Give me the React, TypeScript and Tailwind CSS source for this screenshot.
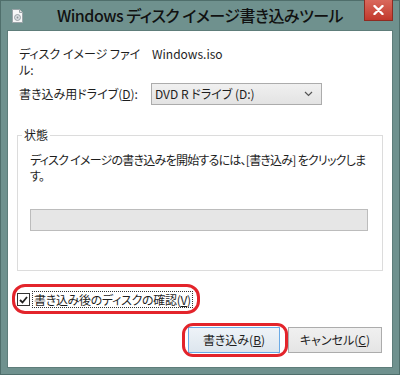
const font = "font-['Noto_Sans_CJK_JP','Noto_Sans',sans-serif] [font-feature-settings:'palt']";

function TitleIcon() {
  return (
    <svg width="11" height="14" viewBox="0 0 11 14" className="block">
      <path d="M0.5 0.5 H7.5 L10.5 3.5 V13.5 H0.5 Z" fill="#f7f7f7" stroke="#9aa4a8" />
      <path d="M7.5 0.5 V3.5 H10.5" fill="#e2e2e2" stroke="#9aa4a8" />
      <circle cx="5.5" cy="8.5" r="3" fill="#d9dde0" stroke="#8c9499" strokeWidth="0.8" />
      <circle cx="5.5" cy="8.5" r="0.9" fill="#8c9499" />
    </svg>
  );
}

function Chevron() {
  return (
    <svg width="9" height="6" viewBox="0 0 9 6" className="block">
      <polyline points="1,1 4.5,4.5 8,1" fill="none" stroke="#555" strokeWidth="1.2" />
    </svg>
  );
}

export default function App() {
  return (
    <div className={`w-[400px] h-[375px] bg-[#6f918e] border border-[#4f6e6b] flex flex-col ${font}`}>
      {/* title bar */}
      <div className="relative h-[29px] flex items-center justify-center shrink-0">
        <div className="absolute left-[11px] top-[8px]">
          <TitleIcon />
        </div>
        <span className="text-[16px] font-medium leading-none text-[#111] tracking-[-0.5px] pb-[1px]">
          Windows ディスク イメージ書き込みツール
        </span>
        <div className="absolute right-[6px] -top-px w-[29px] h-[21px] bg-gradient-to-b from-[#d9685c] to-[#c2382c] border border-[#8e2b22] border-t-0 flex items-center justify-center">
          <svg width="11" height="10" viewBox="0 0 11 10">
            <path d="M1.5 1 L9.5 9 M9.5 1 L1.5 9" stroke="#fff" strokeWidth="2.4" strokeLinecap="round" />
          </svg>
        </div>
      </div>

      {/* client area */}
      <div className="flex-1 mx-[6px] mb-[6px] bg-white border border-[#5e7d7a] flex flex-col pl-[9px] pr-[9px] pt-[15px] text-[12px] leading-[16px] text-[#1e1e1e]">
        <div className="flex pl-[2px]">
          <div className="w-[133px]">
            ディスク イメージ ファイ
            <br />
            ル:
          </div>
          <div>Windows.iso</div>
        </div>

        <div className="flex items-center pl-[2px] mt-[5px]">
          <div className="w-[132px]">
            書き込み用ドライブ(<span className="underline">D</span>):
          </div>
          <div className="w-[171px] h-[22px] border border-[#acacac] bg-gradient-to-b from-[#f0f0f0] to-[#e3e3e3] flex items-center justify-between pl-[3px] pr-[8px]">
            <span>DVD R ドライブ (D:)</span>
            <Chevron />
          </div>
        </div>

        <fieldset className="mt-[22px] border border-[#dcdcdc] w-[366px] min-w-0 px-[12px] pb-[39px]">
          <legend className="-ml-[8px] px-[2px] leading-[16px]">状態</legend>
          <div className="mt-[9px] whitespace-nowrap tracking-[-0.75px]">
            ディスク イメージの書き込みを開始するには、[書き込み] をクリックしま
            <br />
            す。
          </div>
          <div className="mt-[25px] h-[22px] w-[338px] bg-[#e6e6e6] border border-[#bcbcbc]" />
        </fieldset>

        <div className="mt-[20px] flex">
          <div className="relative inline-flex items-center">
            <span className="absolute -left-[5px] -right-[7px] -top-[7px] -bottom-[6px] rounded-[13px] border-[3px] border-[#e3242b]" />
            <span className="w-[13px] h-[13px] border border-[#333] bg-white flex items-center justify-center">
              <svg width="9" height="8" viewBox="0 0 9 8">
                <polyline points="1,4 3.5,6.5 8,1" fill="none" stroke="#222" strokeWidth="1.8" />
              </svg>
            </span>
            <span className="ml-[2px] px-[1px] border border-dotted border-[#333] leading-[15px] tracking-[-0.3px]">
              書き込み後のディスクの確認(<span className="underline">V</span>)
            </span>
          </div>
        </div>

        <div className="mt-[19px] flex justify-end gap-[8px] pr-[1px]">
          <div className="relative">
            <span className="absolute -left-[6px] -right-[8px] -top-[4px] -bottom-[4px] rounded-[11px] border-[3px] border-[#e3242b]" />
            <div className="w-[92px] h-[26px] border border-[#6aaae6] bg-gradient-to-b from-[#eef3f8] to-[#dde6ee] flex items-center justify-center">
              書き込み(<span className="underline">B</span>)
            </div>
          </div>
          <div className="w-[94px] h-[26px] border border-[#acacac] bg-gradient-to-b from-[#f0f0f0] to-[#e5e5e5] flex items-center justify-center">
            キャンセル(<span className="underline">C</span>)
          </div>
        </div>
      </div>
    </div>
  );
}
